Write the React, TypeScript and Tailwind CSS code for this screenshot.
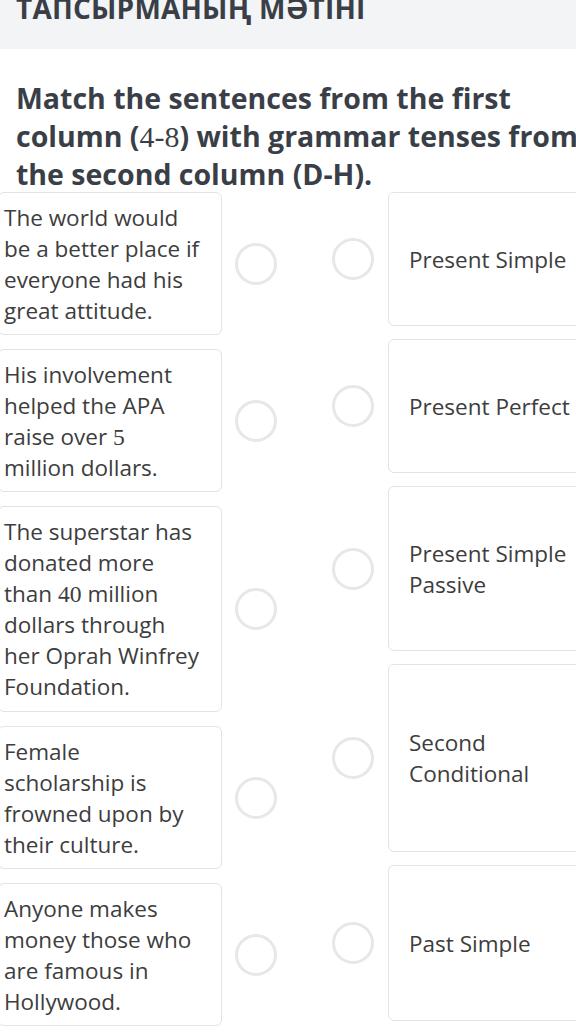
const FONT = { fontFamily: '"Open Sans", "Noto Sans", sans-serif' };

function Num({ children }: { children: React.ReactNode }) {
  return <span className="font-['Liberation_Serif',serif] text-[1.05em] font-normal leading-none">{children}</span>;
}

const SENTENCES: { text: React.ReactNode; h: number }[] = [
  { text: "The world would be a better place if everyone had his great attitude.", h: 143 },
  {
    text: (
      <>
        His involvement helped the APA raise over <Num>5</Num>
        <br />
        million dollars.
      </>
    ),
    h: 143,
  },
  {
    text: (
      <>
        The superstar has donated more than <Num>40</Num> million dollars through her Oprah Winfrey Foundation.
      </>
    ),
    h: 206,
  },
  { text: "Female scholarship is frowned upon by their culture.", h: 143 },
  { text: "Anyone makes money those who are famous in Hollywood.", h: 143 },
];

const TENSES: { text: string; h: number }[] = [
  { text: "Present Simple", h: 134 },
  { text: "Present Perfect", h: 134 },
  { text: "Present Simple Passive", h: 165 },
  { text: "Second Conditional", h: 188 },
  { text: "Past Simple", h: 156 },
];

function Radio() {
  return <div className="h-[42px] w-[42px] shrink-0 rounded-full border-[3px] border-[#e6e7e9] bg-white" />;
}

export default function App() {
  return (
    <div className="h-[1034px] w-[576px] overflow-hidden bg-white text-[#3d3d3d]" style={FONT}>
      <div className="h-[49px] overflow-hidden bg-[#f3f4f6] px-4">
        <div className="-mt-[11px] text-[28px] font-bold leading-[38px] tracking-[0.2px] text-[#3a3f47]">
          ТАПСЫРМАНЫҢ МӘТІНІ
        </div>
      </div>

      <h1 className="px-4 pt-[30px] text-[28.5px] font-bold leading-[38px] text-[#3a3f47] whitespace-nowrap">
        Match the sentences from the first
        <br />
        column (<Num>4-8</Num>) with grammar tenses from
        <br />
        the second column (D-H).
      </h1>

      <div className="-ml-[2px] -mt-[1px] flex items-start">
        <div className="flex w-[279px] shrink-0 flex-col gap-[14px]">
          {SENTENCES.map((s, i) => (
            <div key={i} className="flex items-center gap-[13px]">
              <div
                className="flex w-[224px] shrink-0 items-center rounded-[6px] border-[1.5px] border-[#e2e3e5] pl-[5px] pr-[17px] text-[22.5px] leading-[31px]"
                style={{ height: s.h }}
              >
                <p>{s.text}</p>
              </div>
              <Radio />
            </div>
          ))}
        </div>

        <div className="ml-[55px] flex flex-col gap-[13px]">
          {TENSES.map((t, i) => (
            <div key={i} className="flex items-center gap-[14px]">
              <Radio />
              <div
                className="flex w-[230px] shrink-0 items-center rounded-[6px] border-[1.5px] border-[#e2e3e5] pl-[20px] pr-2 text-[22.5px] leading-[31px]"
                style={{ height: t.h }}
              >
                <span className="w-[165px]">{t.text}</span>
              </div>
            </div>
          ))}
        </div>
      </div>
    </div>
  );
}
